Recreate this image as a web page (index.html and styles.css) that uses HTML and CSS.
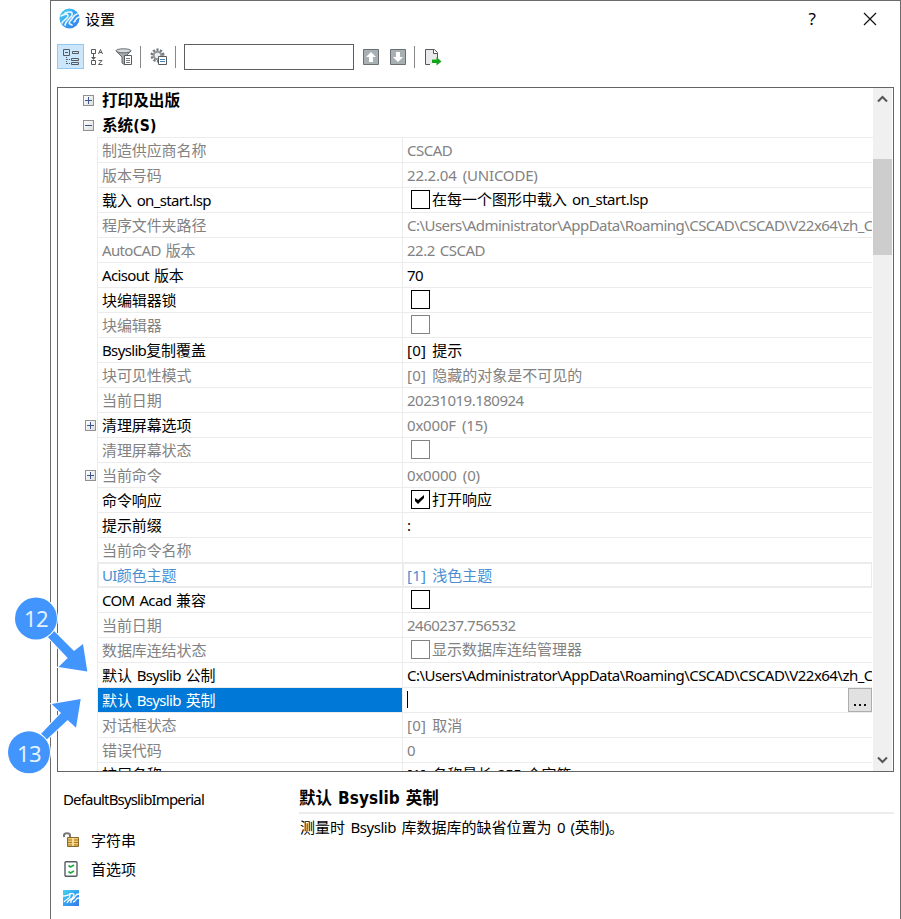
FILE: index.html
```html
<!DOCTYPE html>
<html lang="zh-CN">
<head>
<meta charset="utf-8">
<title>设置</title>
<link rel="stylesheet" href="styles.css">
</head>
<body>
<div class="window">
  <header class="titlebar">
    <svg class="logo" width="21" height="21" viewBox="0 0 21 21"><defs><linearGradient id="g" x1="0" y1="0" x2="1" y2="1"><stop offset="0" stop-color="#48d6ef"/><stop offset=".5" stop-color="#35a3f2"/><stop offset="1" stop-color="#3b78e8"/></linearGradient></defs><circle cx="10.5" cy="10.5" r="10" fill="url(#g)"/><g fill="none" stroke="#fff" stroke-width="1.6" stroke-linecap="round" opacity=".9"><path d="M2 8C6 6 9 5 9 8S4 12 3 15M6 5C11 3 14 4 13 7S7 12 6 17M18 6C14 7 15 9 12 12S10 16 13 17M20 9C16 10 17 13 15 14"/></g></svg>
    <span class="title">设置</span>
    <span class="help">?</span>
    <svg class="close" width="14" height="14" viewBox="0 0 14 14"><path d="M1 1L13 13M13 1L1 13" stroke="#111" stroke-width="1.2"/></svg>
  </header>
  <div class="toolbar">
    <span class="tool active"><svg width="18" height="18" viewBox="0 0 18 18" fill="none" stroke="#555b60"><path d="M1.5 1.5h6v6h-6zM3 4.500h3M10.500 3.500h6v2h-6zM9.500 10.500h7v2h-7zM9.500 14.500h7v2h-7z"/><path d="M4.500 9v7M5 11.500h4M5 15.500h4" stroke-dasharray="1 1"/></svg></span>
    <svg class="sort" width="13" height="18" viewBox="0 0 13 18" fill="none" stroke="#555b60"><path d="M1.500 1.500h4v4h-4zM1.500 12.500h4v4h-4zM3.500 6v4" /><path d="M1 9h5L3.500 12z" fill="#555b60" stroke="none"/><path d="M8.500 6L10.500 1.500 12.500 6M9.200 4.500h2.600M8.500 12.500h3.500L8.500 16.500h4"/></svg>
    <svg class="filter" width="18" height="18" viewBox="0 0 18 18"><path d="M1 3L7 9v6l3 2V9l6-6z" fill="#a5aaad" stroke="#62686c"/><ellipse cx="8.500" cy="2.800" rx="7.500" ry="2" fill="#d8dcde" stroke="#62686c"/><path d="M9.500 7.500h7v9h-7z" fill="#fff" stroke="#555b60"/><path d="M11 10.500h4M11 12.500h4M11 14.500h4" stroke="#777"/></svg>
    <i class="sep"></i>
    <svg class="gear" width="18" height="18" viewBox="0 0 18 18"><circle cx="7.500" cy="7.500" r="5.700" fill="none" stroke="#73797d" stroke-width="2.600" stroke-dasharray="2.200 1.380"/><circle cx="7.500" cy="7.500" r="3.800" fill="#eee" stroke="#8f9598" stroke-width="2"/><path d="M8.500 8.500h8v8h-8z" fill="#fff" stroke="#555b60"/><path d="M10 11.500h5M10 13.500h5" stroke="#4887bd"/></svg>
    <i class="sep"></i>
    <span class="search"></span>
    <svg class="up" width="16" height="16" viewBox="0 0 16 16"><path d="M.5 .5h15v15H.5z" fill="#a9b0b4" stroke="#697074"/><path d="M8 3l5 5h-3v5H6V8H3z" fill="#fff"/></svg>
    <svg class="down" width="16" height="16" viewBox="0 0 16 16"><path d="M.5 .5h15v15H.5z" fill="#a9b0b4" stroke="#697074"/><path d="M8 13l5-5h-3V3H6v5H3z" fill="#fff"/></svg>
    <i class="sep"></i>
    <svg class="export" width="17" height="17" viewBox="0 0 17 17"><path d="M.5 .5h9l3 3v7M5 15.500H.5V.5" fill="none" stroke="#55595c"/><path d="M1 1h8v3h3v6H7v5H1z" fill="#e9e9ec"/><path d="M8.500 .5v4h4" fill="#fff" stroke="#55595c"/><path d="M7 10.500h4.500V8l5 4.500-5 4V14H7z" fill="#12a51c"/></svg>
  </div>

  <main class="panel">
    <div class="tree">
      <div class="group"><i class="box plus"></i><span>打印及出版</span></div>
      <div class="group"><i class="box"></i><span>系统<b class="l">(S)</b></span></div>
      <div class="rows">
        <div class="row dim"><div class="name">制造供应商名称</div><div class="value"><span class="l">CSCAD</span></div></div>
        <div class="row dim"><div class="name">版本号码</div><div class="value"><span class="l num">22.2.04 (UNICODE)</span></div></div>
        <div class="row"><div class="name">载入<span class="l"> on_start.lsp</span></div><div class="value check"><i class="cb"></i>在每一个图形中载入<span class="l"> on_start.lsp</span></div></div>
        <div class="row dim"><div class="name">程序文件夹路径</div><div class="value"><span class="l path">C:\Users\Administrator\AppData\Roaming\CSCAD\CSCAD\V22x64\zh_C</span></div></div>
        <div class="row dim"><div class="name"><span class="l">AutoCAD </span>版本</div><div class="value"><span class="l">22.2 CSCAD</span></div></div>
        <div class="row"><div class="name"><span class="l">Acisout </span>版本</div><div class="value"><span class="l">70</span></div></div>
        <div class="row"><div class="name">块编辑器锁</div><div class="value check"><i class="cb"></i></div></div>
        <div class="row dim"><div class="name">块编辑器</div><div class="value check"><i class="cb"></i></div></div>
        <div class="row"><div class="name"><span class="l">Bsyslib</span>复制覆盖</div><div class="value"><span class="l idx">[0] </span>提示</div></div>
        <div class="row dim"><div class="name">块可见性模式</div><div class="value"><span class="l idx">[0] </span>隐藏的对象是不可见的</div></div>
        <div class="row dim"><div class="name">当前日期</div><div class="value"><span class="l">20231019.180924</span></div></div>
        <div class="row"><i class="box plus"></i><div class="name">清理屏幕选项</div><div class="value dim"><span class="l num">0x000F (15)</span></div></div>
        <div class="row dim"><div class="name">清理屏幕状态</div><div class="value check"><i class="cb"></i></div></div>
        <div class="row dim"><i class="box plus"></i><div class="name">当前命令</div><div class="value"><span class="l num">0x0000 (0)</span></div></div>
        <div class="row"><div class="name">命令响应</div><div class="value check"><i class="cb"><svg width="17" height="17" viewBox="0 0 17 17"><path d="M3 7v3l3 3 6-6V4L6 9z"/></svg></i>打开响应</div></div>
        <div class="row"><div class="name">提示前缀</div><div class="value"><span class="l">:</span></div></div>
        <div class="row dim"><div class="name">当前命令名称</div><div class="value"></div></div>
        <div class="row theme"><div class="name"><span class="l">UI</span>颜色主题</div><div class="value"><span class="l idx">[1] </span>浅色主题</div></div>
        <div class="row"><div class="name"><span class="l">COM Acad </span>兼容</div><div class="value check"><i class="cb"></i></div></div>
        <div class="row dim"><div class="name">当前日期</div><div class="value"><span class="l">2460237.756532</span></div></div>
        <div class="row dim"><div class="name">数据库连结状态</div><div class="value check"><i class="cb"></i>显示数据库连结管理器</div></div>
        <div class="row"><div class="name">默认<span class="l"> Bsyslib </span>公制</div><div class="value"><span class="l path">C:\Users\Administrator\AppData\Roaming\CSCAD\CSCAD\V22x64\zh_C</span></div></div>
        <div class="row selected"><div class="name">默认<span class="l"> Bsyslib </span>英制</div><div class="value"><i class="caret"></i><span class="browse"><i></i><i></i><i></i></span></div></div>
        <div class="row dim"><div class="name">对话框状态</div><div class="value"><span class="l idx">[0] </span>取消</div></div>
        <div class="row dim"><div class="name">错误代码</div><div class="value"><span class="l">0</span></div></div>
        <div class="row last"><div class="name">扩展名称</div><div class="value"><span class="l idx">[1] </span>名称最长<span class="l"> 255 </span>个字符</div></div>
      </div>
    </div>
    <div class="scrollbar">
      <svg width="11" height="8" viewBox="0 0 11 8"><path d="M1 6.500L5.500 2 10 6.500"/></svg>
      <i class="thumb"></i>
      <svg width="11" height="8" viewBox="0 0 11 8"><path d="M1 1.500L5.500 6 10 1.500"/></svg>
    </div>
  </main>

  <footer class="details">
    <div class="meta">
      <div class="var"><span class="l">DefaultBsyslibImperial</span></div>
      <div class="info first"><svg width="17" height="16" viewBox="0 0 17 16"><path d="M1 5V3.500C1 .5 7 .5 7 3.500V6" fill="none" stroke="#777" stroke-width="2"/><path d="M4.500 5.500h11v9h-11z" fill="#eec66a" stroke="#8d682b"/><path d="M5 8h10M5 10.500h10M5 13h10" stroke="#ad7d2d"/><path d="M9 6h2v8H9z" fill="#fff2bb" opacity=".7"/></svg>字符串</div>
      <div class="info"><svg width="17" height="16" viewBox="0 0 17 16"><rect x="2" y=".8" width="12" height="14.400" rx="1" fill="#fff" stroke="#555e62" stroke-width="1.400"/><path d="M5.500 4.500l2 1.500L11 4M5.500 10.500l2 1.500L11 10" fill="none" stroke="#20a840" stroke-width="1.600"/></svg>首选项</div>
      <div class="info"><svg width="17" height="16" viewBox="0 0 17 16"><path d="M0 0h16v16H0z" fill="url(#g)"/><path d="M0 6C5 6 7 3 7 6S3 9 1 12M6 4C11 3 12 4 10 7S6 9 4 13M16 4C12 4 13 6 11 8S7 10 8 13M16 8C12 8 14 11 10 12" fill="none" stroke="#fff" stroke-width="1.300"/></svg></div>
    </div>
    <section class="description">
      <h2>默认<span class="l"> Bsyslib </span>英制</h2>
      <p>测量时<span class="l"> Bsyslib </span>库数据库的缺省位置为<span class="l"> 0 (</span>英制<span class="l">)</span>。</p>
    </section>
  </footer>
</div>
<svg class="callouts" width="100" height="200" viewBox="0 580 100 200">
  <g fill="#4195fc" stroke="#fff" stroke-width="2" paint-order="stroke">
    <path d="M45 634L51 628 74 651 83 644 87.300 671.600 58.500 667 67.700 658z"/><circle cx="36" cy="618.500" r="21"/>
    <path d="M39 736L61 713 51.700 704 80.700 699 76 727.700 67.700 720 44 742z"/><circle cx="29" cy="752.300" r="21"/>
  </g>
  <text x="36" y="627">12</text><text x="29" y="762">13</text>
</svg>
</body>
</html>
```
FILE: styles.css
```css
* { box-sizing: border-box; }
body { margin: 0; width: 901px; height: 919px; overflow: hidden; background: #fff; color: #000; font: 15px/24px "Noto Sans CJK SC", sans-serif; position: relative; }
svg { display: block; flex: none; }
i { display: block; flex: none; font-style: normal; }
.l { font-family: "Noto Sans", sans-serif; letter-spacing: -.65px; word-spacing: 1.600px; white-space: pre; }
.value .l { letter-spacing: -.5px; }
.value .num { word-spacing: 2.500px; letter-spacing: -.2px; }
.value .idx { letter-spacing: .2px; word-spacing: 2px; }
.value .path { letter-spacing: -.54px; }
.window { margin-left: 50px; width: 851px; height: 919px; border: 1px solid #6b6b6b; border-width: 1px 1px 0; }
.titlebar { height: 37px; display: flex; align-items: center; padding: 0 23px 2px 8px; }
.title { margin-left: 5px; flex: 1; }
.help { font: 17px/24px "Noto Sans", sans-serif; margin-right: 47px; }
.toolbar { height: 49px; padding: 6px 0 0 6px; display: flex; align-items: flex-start; }
.tool { width: 27px; height: 25px; border: 1px solid #94c8ef; background: #cce6fc; display: flex; align-items: center; justify-content: center; }
.sort { margin: 4px 0 0 6px; }
.filter { margin: 4px 0 0 12px; }
.sep { width: 1px; height: 22px; background: #888; margin-top: 2px; }
.toolbar .sep { margin-left: 7px; }
.toolbar .gear { margin: 4px 0 0 9px; }
.toolbar .gear + .sep { margin-left: 7px; }
.search { width: 170px; height: 26px; border: 1px solid #5d5d5d; margin-left: 8px; }
.up { margin: 5px 0 0 9px; }
.down { margin: 5px 0 0 11px; }
.toolbar .down + .sep { margin-left: 8px; }
.export { margin: 5px 0 0 10px; }
.panel { margin-left: 6px; width: 837px; height: 685px; border: 1px solid #646464; display: flex; overflow: hidden; }
.tree { width: 815px; height: 683px; overflow: hidden; }
.group { height: 25px; display: flex; align-items: center; padding-left: 25px; font-weight: 700; gap: 8px; }
.group:nth-child(2) { height: 24px; }
.group span { font-size: 15.6px; margin-top: -3px; }
.group:nth-child(2) span { margin-top: 0; }
.group .l { font-family: "DejaVu Sans Condensed", sans-serif; letter-spacing: .2px; }
.box { width: 11px; height: 11px; border: 1px solid #919191; background: linear-gradient(#3c558f, #3c558f) center / 7px 1px no-repeat, linear-gradient(135deg, #fff, #ddd); }
.plus { background: linear-gradient(#3c558f, #3c558f) center / 7px 1px no-repeat, linear-gradient(#3c558f, #3c558f) center / 1px 7px no-repeat, linear-gradient(135deg, #fff, #ddd); }
.rows { border-top: 1px solid #ececec; margin-left: 39px; }
.row { height: 25px; display: grid; grid-template-columns: 304px 470px; width: 775px; position: relative; border-bottom: 1px solid #ececec; border-left: 1px solid #ececec; }
.name { padding-left: 4px; white-space: nowrap; letter-spacing: -.1px; }
.value { border-left: 1px solid #ececec; padding-left: 4px; overflow: hidden; white-space: nowrap; min-width: 0; }
.row .box { position: absolute; left: -13px; top: 7px; }
.last { line-height: 21px; }
.dim { color: #828282; }
.check { display: flex; padding-left: 8px; line-height: 22px; }
.cb { width: 19px; height: 19px; border: 1px solid currentColor; margin: 2px 2px 0 0; }
.theme { color: #4a8fd2; box-shadow: inset 1px 1px #ececec, inset -1px -1px #ececec; }
.theme .value { border-left-width: 2px; padding-left: 3px; }
.selected .name { background: #0078d7; color: #fff; }
.selected .value { display: flex; justify-content: space-between; }
.caret { width: 1px; height: 17px; background: #000; margin-top: 3px; }
.browse { width: 24px; height: 24px; border: 1px solid #adadad; background: #e1e1e1; display: flex; gap: 3px; padding: 15px 0 0 5px; }
.browse i { width: 2px; height: 2px; background: #111; }
.scrollbar { width: 19px; background: #f0f0f0; display: flex; flex-direction: column; align-items: center; padding: 7px 0; }
.scrollbar path { fill: none; stroke: #555; stroke-width: 2; }
.thumb { width: 19px; height: 96px; background: #cdcdcd; margin: 56px 0 auto; }
.details { display: flex; height: 146px; }
.meta { width: 248px; padding: 15px 0 0 12px; }
.var .l { letter-spacing: -.84px; }
.info { height: 29px; display: flex; align-items: center; gap: 11px; }
.info.first { margin-top: 14px; }
.description { flex: 1; margin-right: 6px; }
h2 { margin: 0; height: 42px; border-bottom: 2px solid #ececec; font: 700 16.500px/24px "Noto Sans CJK SC", sans-serif; padding-top: 13px; }
h2 .l { font-family: "DejaVu Sans Condensed", sans-serif; font-size: 17px; letter-spacing: .1px; word-spacing: .5px; }
p { margin: 1px 0 0 1px; }
p .l { letter-spacing: -.45px; word-spacing: 2px; }
.callouts { position: absolute; left: 0; top: 580px; }
.callouts text { font: 22px "Noto Sans", sans-serif; letter-spacing: -.5px; fill: #e4f2ff; text-anchor: middle; }
```
